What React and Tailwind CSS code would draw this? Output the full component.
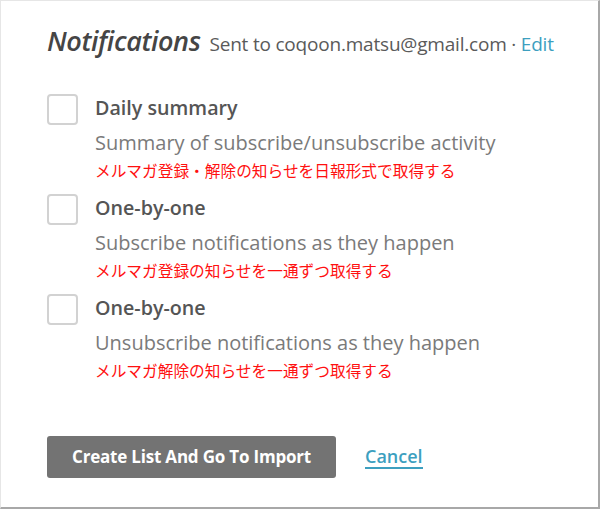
const items = [
  {
    title: "Daily summary",
    desc: "Summary of subscribe/unsubscribe activity",
    note: "メルマガ登録・解除の知らせを日報形式で取得する",
  },
  {
    title: "One-by-one",
    desc: "Subscribe notifications as they happen",
    note: "メルマガ登録の知らせを一通ずつ取得する",
  },
  {
    title: "One-by-one",
    desc: "Unsubscribe notifications as they happen",
    note: "メルマガ解除の知らせを一通ずつ取得する",
  },
];

const App = () => {
  return (
    <div
      className="w-[600px] h-[509px] bg-white border-t border-l border-[#e6e6e6] border-r-2 border-b-2 border-r-[#a8a8a8] border-b-[#a8a8a8] pl-[46px] pt-[22px]"
      style={{ fontFamily: '"Open Sans", "Noto Sans", sans-serif' }}
    >
      {/* header */}
      <div className="flex items-baseline whitespace-nowrap">
        <h2 className="text-[27px] italic font-semibold text-[#454545] tracking-[-0.4px] leading-[36px]">
          Notifications
        </h2>
        <span className="ml-[9px] text-[19px] text-[#5a5a5a] tracking-[-0.2px]">
          Sent to coqoon.matsu@gmail.com ·{" "}
          <span className="text-[#3d9fbf]">Edit</span>
        </span>
      </div>

      {/* options */}
      <div className="mt-[35px] flex flex-col">
        {items.map((item, i) => (
          <div key={i} className="flex h-[100px]">
            <div className="w-[31px] h-[31px] rounded-[4px] border-2 border-[#d2d2d2] bg-white shrink-0" />
            <div className="ml-[17px] whitespace-nowrap">
              <div className="text-[19.7px] font-semibold text-[#555] leading-[28px]">
                {item.title}
              </div>
              <div className="mt-[8px] text-[20px] text-[#7a7a7a] leading-[26px]">
                {item.desc}
              </div>
              <div
                className="mt-[4px] text-[15.7px] text-[#ff1010] leading-[22px]"
                style={{ fontFamily: '"Noto Sans CJK JP", sans-serif' }}
              >
                {item.note}
              </div>
            </div>
          </div>
        ))}
      </div>

      {/* actions */}
      <div className="mt-[42px] flex items-center">
        <button className="w-[289px] h-[42px] rounded-[3px] bg-[#737373] text-white text-[17px] font-bold tracking-[-0.2px]">
          Create List And Go To Import
        </button>
        <a className="ml-[29px] text-[18px] font-semibold text-[#3d9fbf] border-b-2 border-[#3d9fbf] leading-[22px]">
          Cancel
        </a>
      </div>
    </div>
  );
};

export default App;
